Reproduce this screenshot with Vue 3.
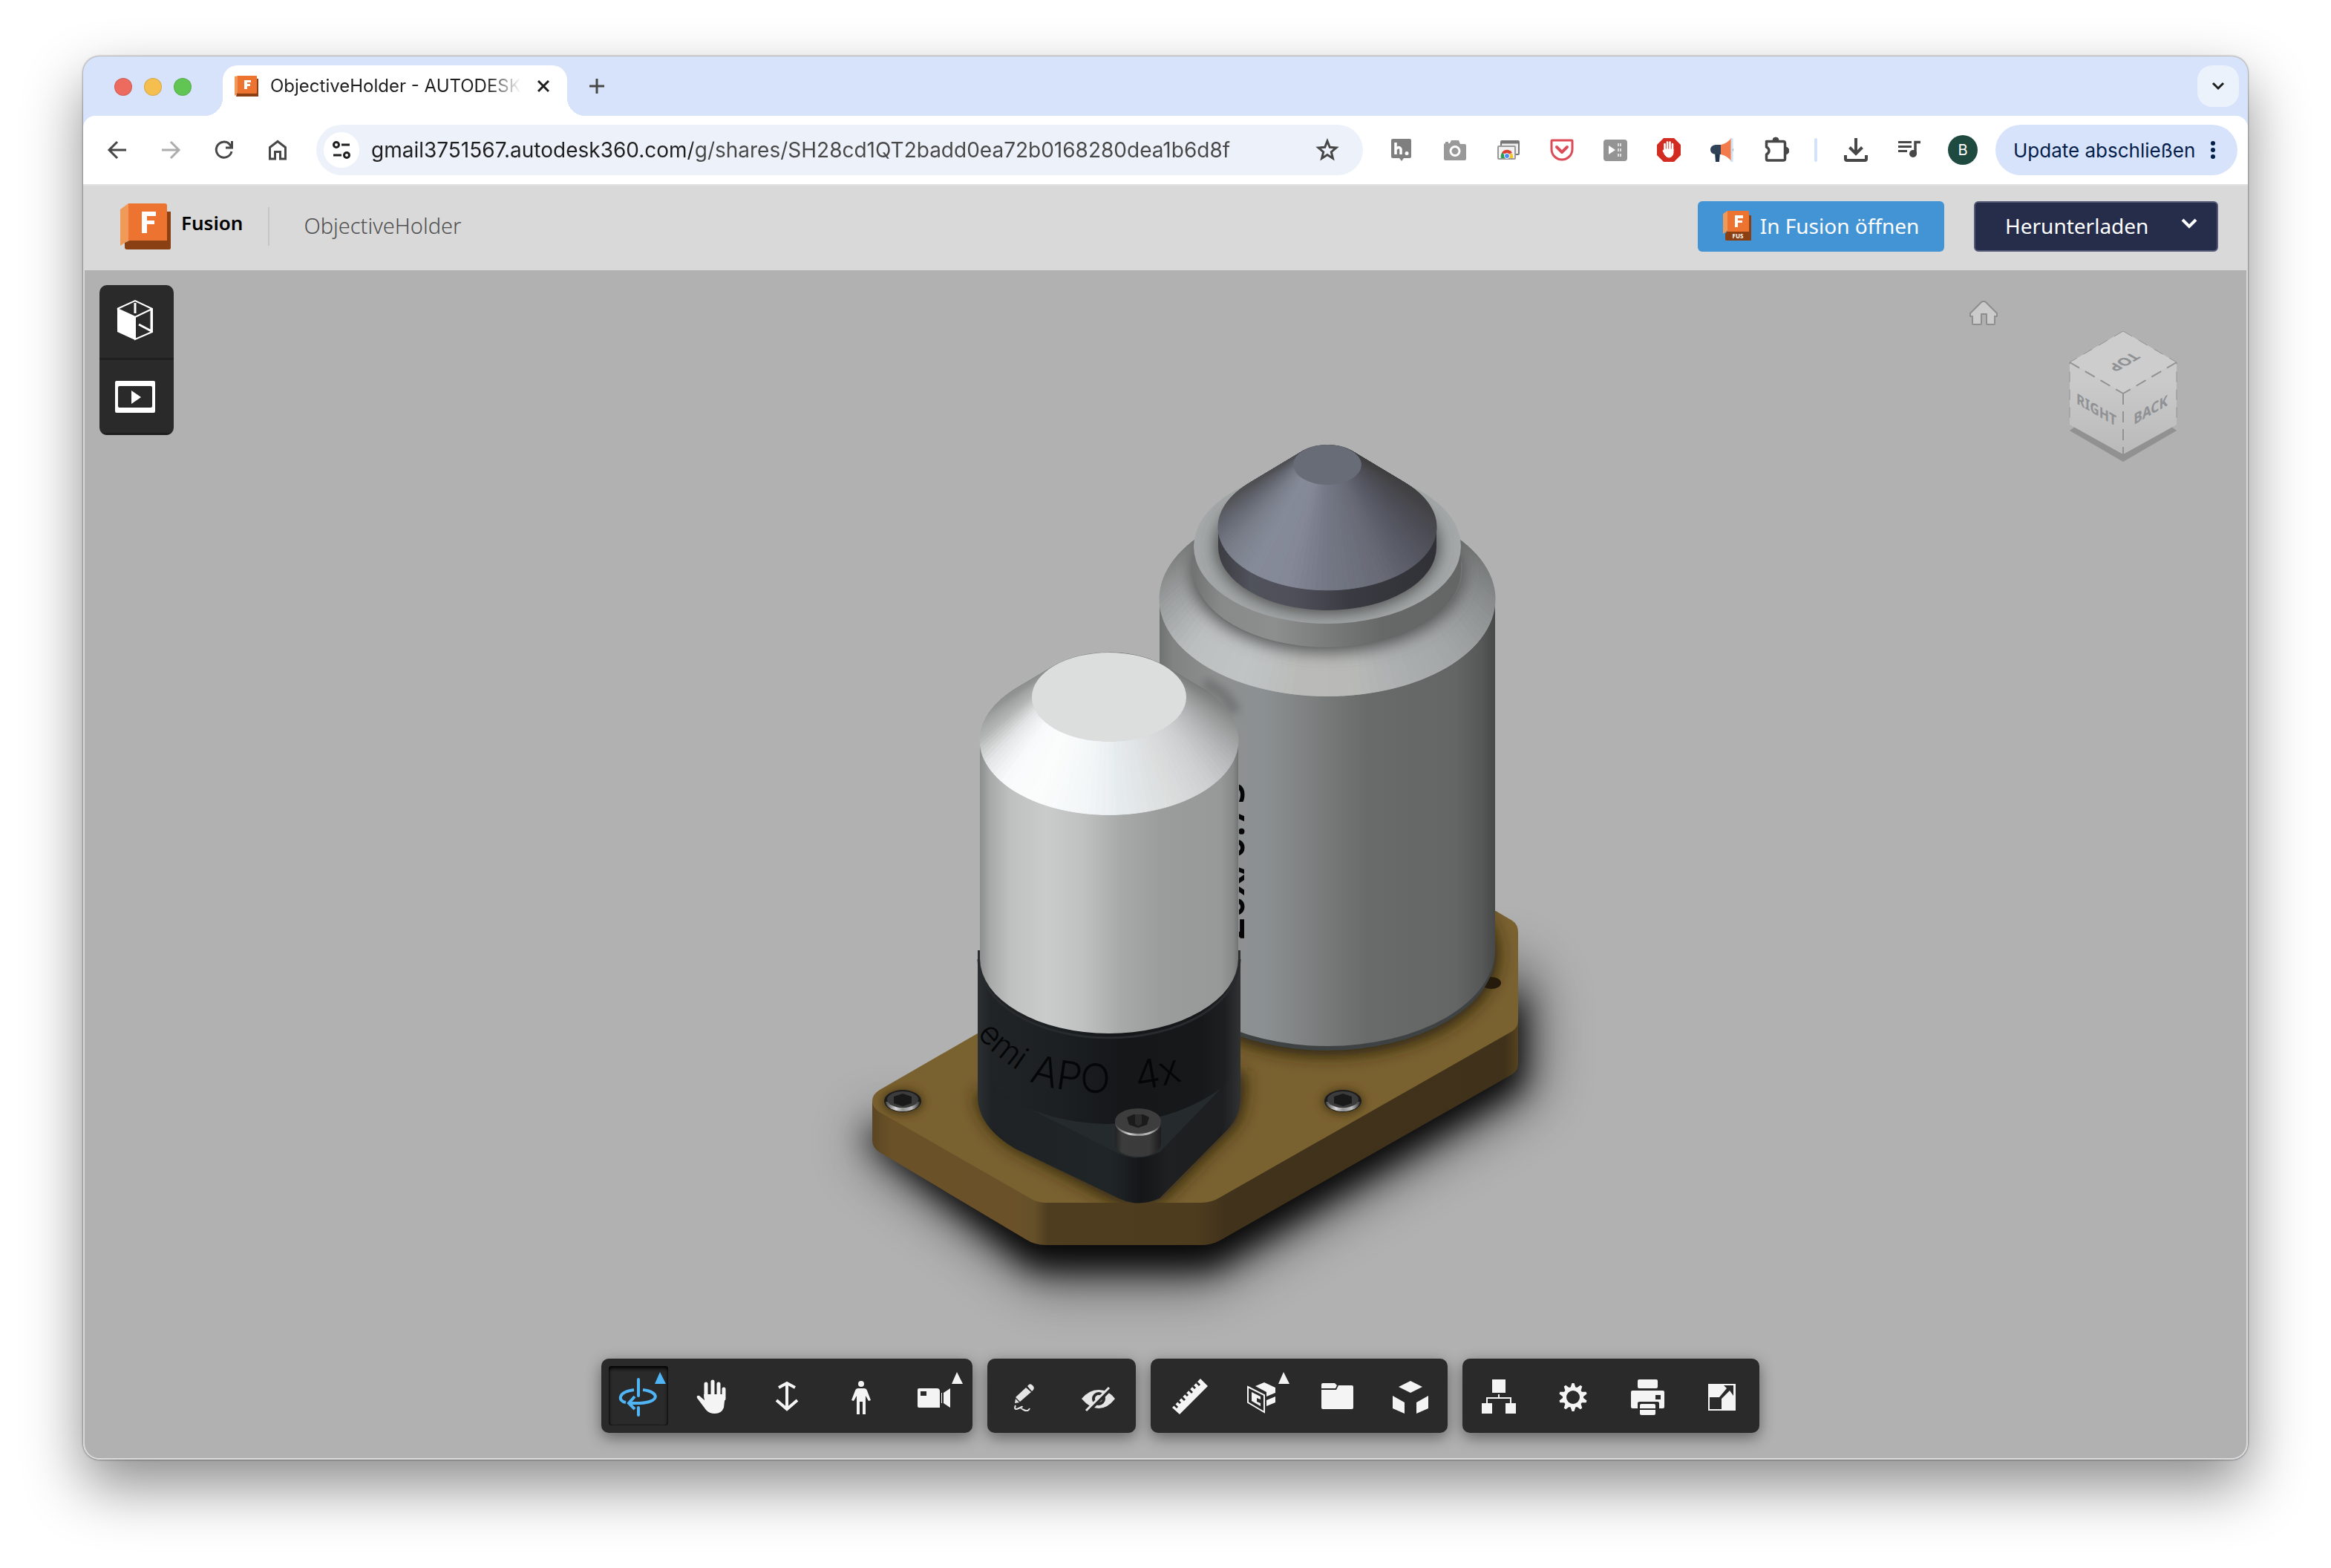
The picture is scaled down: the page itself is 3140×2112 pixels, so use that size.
<script setup>
import { ref } from 'vue'

const url = ref('gmail3751567.autodesk360.com/g/shares/SH28cd1QT2badd0ea72b0168280dea1b6d8f')

const K = 0.577

const hexToRgb = (h) => [1, 3, 5].map((i) => parseInt(h.slice(i, i + 2), 16))

function shade(stops, deg) {
  for (let i = 1; i < stops.length; i++) {
    const [d0, c0] = stops[i - 1]
    const [d1, c1] = stops[i]
    if (deg <= d1) {
      const t = (deg - d0) / (d1 - d0)
      const a = hexToRgb(c0)
      const b = hexToRgb(c1)
      return `rgb(${a.map((v, j) => Math.round(v + (b[j] - v) * t)).join(',')})`
    }
  }
  return stops[stops.length - 1][1]
}

// Facets of a truncated cone, sorted from back to front. Angles: 0 right, 90 front, 180 left.
function frustum(cx, y1, r1, y2, r2, stops) {
  const n = 120
  const facets = []
  for (let i = 0; i < n; i++) {
    const a0 = -90 + (i * 360) / n
    const a1 = a0 + 360 / n
    const pt = (r, y, a) => {
      const t = (a * Math.PI) / 180
      return `${(cx + r * Math.cos(t)).toFixed(1)},${(y + r * K * Math.sin(t)).toFixed(1)}`
    }
    facets.push({
      depth: Math.sin((((a0 + a1) / 2) * Math.PI) / 180),
      color: shade(stops, (a0 + a1) / 2),
      points: [pt(r1, y1, a0), pt(r1, y1, a1), pt(r2, y2, a1), pt(r2, y2, a0)].join(' '),
    })
  }
  return facets.sort((a, b) => a.depth - b.depth)
}

const noseCone = frustum(1788, 624, 46, 708, 147, [
  [-90, '#3f3f41'], [-35, '#3f3f41'], [-12, '#434346'], [8, '#4a4a52'], [35, '#565863'], [60, '#686b76'],
  [90, '#747885'], [112, '#858997'], [135, '#868b99'], [155, '#7b7f8b'], [180, '#636670'], [205, '#505155'], [225, '#515254'], [270, '#515254'],
])
const largeBevel = frustum(1788, 766, 182, 805, 226, [
  [-90, '#6a6d6c'], [-40, '#6a6d6c'], [-10, '#7e8181'], [10, '#8d9090'], [40, '#a3a6a7'], [65, '#adb0b1'],
  [82, '#b9bab8'], [100, '#babbb9'], [120, '#c0c4c5'], [145, '#bdc0c0'], [165, '#a6a9a9'], [190, '#8b8e8d'], [225, '#707372'], [270, '#707372'],
])
const smallBevel = frustum(1494, 937, 104, 995, 174, [
  [-90, '#707171'], [-45, '#757676'], [-20, '#858686'], [0, '#9d9e9e'], [20, '#b8b9ba'], [40, '#cfd0d2'],
  [60, '#dbdddd'], [85, '#e6ebee'], [100, '#f3f6f7'], [125, '#fbfdfd'], [145, '#f8fafb'], [162, '#e2e4e5'], [180, '#b4b6b6'], [205, '#929493'], [225, '#8b8d8d'], [270, '#8b8d8d'],
])
const solids = { noseCone, largeBevel, smallBevel }

const extensions = ['hypothesis', 'camera', 'tabs', 'pocket', 'speed', 'blocker', 'megaphone', 'puzzle']

const groups = [
  [
    { id: 'orbit', label: 'Orbit', menu: true, active: true },
    { id: 'pan', label: 'Pan' },
    { id: 'zoom', label: 'Zoom' },
    { id: 'walk', label: 'First person' },
    { id: 'video', label: 'Camera', menu: true },
  ],
  [
    { id: 'markup', label: 'Markup' },
    { id: 'hide', label: 'Hide markup' },
  ],
  [
    { id: 'measure', label: 'Measure' },
    { id: 'section', label: 'Section', menu: true },
    { id: 'folder', label: 'Documents' },
    { id: 'explode', label: 'Explode' },
  ],
  [
    { id: 'tree', label: 'Model browser' },
    { id: 'gear', label: 'Settings' },
    { id: 'print', label: 'Print' },
    { id: 'full', label: 'Full screen' },
  ],
]

const gearPoints = Array.from({ length: 40 }, (_, i) => {
  const r = i % 4 < 2 ? 19 : 14
  const a = ((i * 9 - 94.5) * Math.PI) / 180
  return `${(49 + r * Math.cos(a)).toFixed(1)},${(52 + r * Math.sin(a)).toFixed(1)}`
}).join(' ')
</script>

<template>
  <div class="page">
    <div class="window">
      <div class="tabstrip">
        <div class="lights">
          <button class="light red" aria-label="Close window"></button>
          <button class="light yellow" aria-label="Minimise"></button>
          <button class="light green" aria-label="Zoom window"></button>
        </div>
        <div class="tab">
          <svg class="favicon" viewBox="0 0 32 28" aria-hidden="true">
            <path d="M0 1 5 0V24L0 27Z" fill="#f09a5a" />
            <path d="M3 24 30 4H32V28H2Z" fill="#8a4012" />
            <rect x="4" width="26" height="24" rx="1" fill="#ed7430" />
            <path d="M13 6H22V9H17V11H21V14H17V18H13Z" fill="#fff" />
          </svg>
          <span class="tab-title">ObjectiveHolder - AUTODESK</span>
          <button class="tab-close" aria-label="Close tab">
            <svg viewBox="0 0 16 16"><path d="M1 1 15 15M15 1 1 15" stroke="#1f1f1f" stroke-width="3" /></svg>
          </button>
        </div>
        <button class="new-tab" aria-label="New tab">
          <svg viewBox="0 0 20 20"><path d="M10 0V20M0 10H20" stroke="#474747" stroke-width="3" /></svg>
        </button>
        <button class="tab-search" aria-label="Search tabs">
          <svg viewBox="0 0 18 12"><path d="M2 2 9 9 16 2" fill="none" stroke="#1f1f1f" stroke-width="3" /></svg>
        </button>
      </div>

      <div class="toolbar">
        <button class="icon-btn" aria-label="Back">
          <svg viewBox="0 0 32 32"><path d="M28 16H6M16 5 5 16 16 27" fill="none" stroke="#474747" stroke-width="3" /></svg>
        </button>
        <button class="icon-btn" aria-label="Forward">
          <svg viewBox="0 0 32 32"><path d="M4 16H26M16 5 27 16 16 27" fill="none" stroke="#adadad" stroke-width="3" /></svg>
        </button>
        <button class="icon-btn" aria-label="Reload">
          <svg viewBox="0 0 32 32"><path d="M26 18A10.500 10.500 0 1 1 23 8L26 12M26.500 4V13H18" fill="none" stroke="#474747" stroke-width="3" /></svg>
        </button>
        <button class="icon-btn" aria-label="Home">
          <svg viewBox="0 0 32 32"><path d="M5.500 28V12.500L16 4.500 26.500 12.500V28H19.500V18.500H12.500V28Z" fill="none" stroke="#474747" stroke-width="3" /></svg>
        </button>
        <div class="omnibox">
          <button class="site-info" aria-label="Site information">
            <svg viewBox="0 0 28 28"><g fill="none" stroke="#1f1f1f" stroke-width="3"><circle cx="7" cy="7" r="3.500" /><path d="M14 7H25M3 21H14" /><circle cx="21" cy="21" r="3.500" /></g></svg>
          </button>
          <input v-model="url" class="url" type="text" aria-label="Address" spellcheck="false" />
          <button class="star" aria-label="Bookmark">
            <svg viewBox="0 0 32 32"><path d="M16 4 19.300 12.300 28 13 21.300 18.700 23.400 27.200 16 22.600 8.600 27.200 10.700 18.700 4 13 12.700 12.300Z" fill="none" stroke="#474747" stroke-width="3" /></svg>
          </button>
        </div>
        <div class="extensions">
          <button v-for="e in extensions" :key="e" class="icon-btn" :aria-label="e">
            <svg v-if="e === 'hypothesis'" viewBox="0 0 36 36">
              <path d="M6 3H29Q31 3 31 5V27Q31 29 29 29H21L18 33 15 29H6Q4 29 4 27V5Q4 3 6 3Z" fill="#7f7f7f" />
              <path d="M10 8V24M10 17Q15 12 17 17V24" fill="none" stroke="#fff" stroke-width="3.500" />
              <circle cx="25" cy="22.500" r="2.500" fill="#fff" />
            </svg>
            <svg v-else-if="e === 'camera'" viewBox="0 0 36 36">
              <path d="M3 11Q3 9 5 9V7H9V9H11L13 5H23L25 10H31Q33 10 33 12V30Q33 32 31 32H5Q3 32 3 30Z" fill="#999" />
              <circle cx="18" cy="19.500" r="6" fill="none" stroke="#fff" stroke-width="3" />
            </svg>
            <svg v-else-if="e === 'tabs'" viewBox="0 0 36 36">
              <rect x="8" y="6" width="24" height="18" rx="1" fill="#eee" stroke="#777" stroke-width="2" />
              <path d="M8 8H32" stroke="#777" stroke-width="3" />
              <rect x="4" y="13" width="23" height="17" rx="1" fill="#f2f2f2" stroke="#999" stroke-width="2" />
              <path d="M8 29A8 8 0 0 1 10 21L15 29Z" fill="#2f9a50" />
              <path d="M9 22A8 8 0 0 1 23 22L16 24Z" fill="#d8402f" />
              <path d="M16 23H23A8 8 0 0 1 24 29H17Z" fill="#f5c431" />
              <circle cx="16" cy="26" r="3.500" fill="#4b8bf5" stroke="#fff" />
            </svg>
            <svg v-else-if="e === 'pocket'" viewBox="0 0 36 36">
              <path d="M5 5H31Q32 5 32 6V17A14 14 0 0 1 4 17V6Q4 5 5 5Z" fill="none" stroke="#dd4b57" stroke-width="3" />
              <path d="M11 14 18 21 25 14" fill="none" stroke="#dd4b57" stroke-width="4" stroke-linecap="round" stroke-linejoin="round" />
            </svg>
            <svg v-else-if="e === 'speed'" viewBox="0 0 36 36">
              <rect x="2" y="4" width="32" height="29" rx="4" fill="#949494" />
              <path d="M9 12 18 18 9 24Z" fill="#fff" />
              <path d="M21 11H26M21 18H26M21 25H26" stroke="#ddd" stroke-width="4" stroke-dasharray="2 1" />
            </svg>
            <svg v-else-if="e === 'blocker'" viewBox="0 0 36 36">
              <path d="M11 2H25L34 11V25L25 34H11L2 25V11Z" fill="#d22b22" />
              <g stroke="#fff" stroke-width="2.600" stroke-linecap="round" fill="#fff">
                <path d="M12.500 19V10M16 17V7.500M19.500 17V7.500M23 19V10" />
                <path d="M12.500 17H24V22Q23 28 18 28 15 28 13 25L10 19Q10 17 13 20Z" stroke-width="1" />
              </g>
            </svg>
            <svg v-else-if="e === 'megaphone'" viewBox="0 0 36 36">
              <path d="M30 14Q36 18 30 21Z" fill="#2c3e55" />
              <path d="M8 21H15L14 34H9Z" fill="#23364d" />
              <path d="M17 11V24H9Q2 23 2 17.500T9 11Z" fill="#2f4257" />
              <path d="M16 11Q25 9 30 2V33Q25 26 16 24Z" fill="#f27a4b" />
              <path d="M31 2V34" stroke="#cfe3f2" stroke-width="3" />
            </svg>
            <svg v-else viewBox="0 0 36 36">
              <path d="M5.500 6.500H28Q30.500 6.500 30.500 9V30Q30.500 32 28 32H7Q5.500 32 5.500 30V24Q9 22 9 19T5.500 14Z" fill="none" stroke="#474747" stroke-width="3.500" stroke-linejoin="round" />
              <path d="M14 5A4 4 0 0 1 22 5ZM31 14A5 5 0 0 1 31 24Z" fill="#474747" stroke="#474747" />
            </svg>
          </button>
        </div>
        <span class="separator"></span>
        <button class="icon-btn" aria-label="Downloads">
          <svg viewBox="0 0 36 36"><path d="M18 2V23M9.500 14.500 18 23 26.500 14.500M4 25V30Q4 32 6 32H30Q32 32 32 30V25" fill="none" stroke="#474747" stroke-width="4" /></svg>
        </button>
        <button class="icon-btn" aria-label="Media">
          <svg viewBox="0 0 36 36"><path d="M3 7.500H21M3 13.500H21M3 19.500H15" stroke="#474747" stroke-width="3" /><circle cx="23" cy="23" r="5" fill="#474747" /><path d="M26 23V7.500H33" fill="none" stroke="#474747" stroke-width="3.500" /></svg>
        </button>
        <button class="icon-btn" aria-label="Profile"><span class="avatar">B</span></button>
        <button class="update">
          <span>Update abschließen</span>
          <svg viewBox="0 0 6 36" aria-hidden="true"><g fill="#041e49"><circle cx="3" cy="9" r="3" /><circle cx="3" cy="18" r="3" /><circle cx="3" cy="27" r="3" /></g></svg>
        </button>
      </div>

      <header class="app-header">
        <svg class="logo" viewBox="0 0 68 62" aria-hidden="true">
          <path d="M0 8 11 0V50L0 57Z" fill="#f09a5a" />
          <path d="M6 53 12 50H62V11H68V60Q68 62 66 62H9Q6 62 6 59Z" fill="#8a4012" />
          <path d="M11 0H60Q63 0 63 3V50H11Z" fill="#ed7430" />
          <path d="M29 11H48V17H36V23H46V28H36V40H29Z" fill="#fff" />
        </svg>
        <span class="brand">Fusion</span>
        <span class="rule"></span>
        <h1 class="doc-title">ObjectiveHolder</h1>
        <button class="open-btn">
          <svg viewBox="0 0 38 40" aria-hidden="true">
            <path d="M0 4 6 0V27L0 31Z" fill="#f09a5a" />
            <path d="M3 31 6 27H34V6H38V40H5Q3 40 3 38Z" fill="#8a4012" />
            <path d="M6 0H33Q35 0 35 2V28H6Z" fill="#ed7430" />
            <path d="M16 6H27V10H20V13H26V16H20V22H16Z" fill="#fff" />
            <text x="20" y="37" text-anchor="middle" font-size="8" font-weight="700" fill="#fff">FUS</text>
          </svg>
          <span>In Fusion öffnen</span>
        </button>
        <button class="download-btn">
          <span>Herunterladen</span>
          <svg viewBox="0 0 22 14" aria-hidden="true"><path d="M2 2 11 11 20 2" fill="none" stroke="#fff" stroke-width="4" /></svg>
        </button>
      </header>

      <main class="viewer">
        <svg class="scene" viewBox="114 362 2912 1600" role="img" aria-label="ObjectiveHolder">
          <defs>
            <filter id="blur40" x="-30%" y="-50%" width="160%" height="200%"><feGaussianBlur stdDeviation="36" /></filter>
            <filter id="blur20" x="-30%" y="-50%" width="160%" height="200%"><feGaussianBlur stdDeviation="20" /></filter>
            <filter id="blur12" x="-30%" y="-30%" width="160%" height="160%"><feGaussianBlur stdDeviation="11" /></filter>
            <filter id="blur6" x="-30%" y="-30%" width="160%" height="160%"><feGaussianBlur stdDeviation="6" /></filter>
            <linearGradient id="plateSide" gradientUnits="userSpaceOnUse" x1="1175" y1="0" x2="2045" y2="0">
              <stop offset="0" stop-color="#5b4623" /><stop offset=".03" stop-color="#6a5128" /><stop offset=".22" stop-color="#6a5129" />
              <stop offset=".25" stop-color="#65502a" /><stop offset=".272" stop-color="#4f3d1f" /><stop offset=".5" stop-color="#4e3c1e" />
              <stop offset=".545" stop-color="#41331b" /><stop offset=".98" stop-color="#40321a" /><stop offset="1" stop-color="#55421f" />
            </linearGradient>
            <linearGradient id="largeBody">
              <stop offset="0" stop-color="#6f7271" /><stop offset=".04" stop-color="#808382" /><stop offset=".18" stop-color="#8f9191" />
              <stop offset=".31" stop-color="#8b9092" /><stop offset=".4" stop-color="#838686" /><stop offset=".52" stop-color="#757777" />
              <stop offset=".62" stop-color="#696b6a" /><stop offset=".88" stop-color="#646665" /><stop offset=".96" stop-color="#565857" /><stop offset="1" stop-color="#474948" />
            </linearGradient>
            <linearGradient id="ringSide">
              <stop offset="0" stop-color="#717473" /><stop offset=".1" stop-color="#878a89" /><stop offset=".3" stop-color="#8d8f8e" />
              <stop offset=".55" stop-color="#747776" /><stop offset=".7" stop-color="#676968" /><stop offset="1" stop-color="#646665" />
            </linearGradient>
            <linearGradient id="noseSide">
              <stop offset="0" stop-color="#3c3d42" /><stop offset=".15" stop-color="#50525c" /><stop offset=".35" stop-color="#4e4f59" />
              <stop offset=".6" stop-color="#3a3b42" /><stop offset="1" stop-color="#303036" />
            </linearGradient>
            <linearGradient id="smallBody">
              <stop offset="0" stop-color="#8c8e8e" /><stop offset=".04" stop-color="#a8aaaa" /><stop offset=".12" stop-color="#bfc1c0" />
              <stop offset=".26" stop-color="#cacccc" /><stop offset=".4" stop-color="#bfc1c0" /><stop offset=".55" stop-color="#a7a9a8" />
              <stop offset=".7" stop-color="#9b9d9c" /><stop offset=".93" stop-color="#979998" /><stop offset=".98" stop-color="#888a89" /><stop offset="1" stop-color="#727473" />
            </linearGradient>
            <linearGradient id="black">
              <stop offset="0" stop-color="#2c2f31" /><stop offset=".05" stop-color="#212426" /><stop offset=".3" stop-color="#1c2022" />
              <stop offset=".55" stop-color="#151719" /><stop offset=".85" stop-color="#17181a" /><stop offset=".94" stop-color="#1d1f20" /><stop offset="1" stop-color="#303233" />
            </linearGradient>
            <linearGradient id="blackBase">
              <stop offset="0" stop-color="#2c2f31" /><stop offset=".06" stop-color="#1e2224" /><stop offset=".5" stop-color="#202527" />
              <stop offset=".56" stop-color="#1b1f21" /><stop offset=".62" stop-color="#141618" /><stop offset=".68" stop-color="#1a1b1d" />
              <stop offset=".72" stop-color="#1f2021" /><stop offset=".93" stop-color="#1c1e1f" /><stop offset="1" stop-color="#303233" />
            </linearGradient>
            <linearGradient id="screwSide">
              <stop offset="0" stop-color="#222" /><stop offset=".15" stop-color="#3c3c3c" /><stop offset=".75" stop-color="#3a3a3a" /><stop offset="1" stop-color="#1c1c1c" />
            </linearGradient>
            <linearGradient id="rim">
              <stop offset="0" stop-color="#444" /><stop offset=".3" stop-color="#d8d8d8" /><stop offset=".5" stop-color="#909090" /><stop offset=".75" stop-color="#c0c0c0" /><stop offset="1" stop-color="#333" />
            </linearGradient>
            <clipPath id="plateClip"><path d="M1185 1466 1315 1391 1600 1225H2015L2037 1238Q2045 1243 2045 1254V1372Q2045 1382 2037 1387L1643 1611Q1632 1618 1618 1618H1408Q1396 1618 1386 1611L1185 1496Q1175 1490 1175 1481T1185 1466Z" /></clipPath>
            <clipPath id="bevelClip"><ellipse cx="1788" cy="805" rx="226" ry="131" /></clipPath>
            <clipPath id="ringClip"><ellipse cx="1788" cy="734" rx="180" ry="104" /></clipPath>
            <clipPath id="largeClip"><path d="M1562 805V1276A226 131 0 0 0 2014 1276V805Z" /></clipPath>
            <clipPath id="letterClip"><rect x="1669" y="1000" width="60" height="290" /></clipPath>
            <clipPath id="blackClip"><path d="M1318 1278V1520H1670V1278Z" /></clipPath>
            <path id="labelLeft" d="M1316 1391Q1338 1422 1400 1458" />
            <path id="labelMain" d="M1386 1454Q1490 1490 1624 1444" />
          </defs>

          <path d="M1175 1500 1406 1675H1620L2045 1430V1310L2015 1290 1640 1600 1400 1560Z" fill="#000" stroke="#000" stroke-width="50" opacity=".55" filter="url(#blur40)" transform="translate(0 26)" />
          <path d="M1176 1520 1396 1690H1630L2044 1446V1340L1600 1600 1300 1520Z" fill="#000" stroke="#000" stroke-width="12" opacity=".9" filter="url(#blur20)" transform="translate(0 10)" />

          <path d="M1175 1481V1534Q1175 1544 1185 1550L1383 1668Q1394 1675 1408 1675H1618Q1632 1675 1643 1669L2037 1445Q2045 1440 2045 1430V1372L1620 1560H1400Z" fill="url(#plateSide)" />
          <path d="M1185 1466 1315 1391 1600 1225H2015L2037 1238Q2045 1243 2045 1254V1372Q2045 1382 2037 1387L1643 1611Q1632 1618 1618 1618H1408Q1396 1618 1386 1611L1185 1496Q1175 1490 1175 1481T1185 1466Z" fill="#7a6130" />
          <g clip-path="url(#plateClip)">
            <ellipse cx="1788" cy="1284" rx="230" ry="136" fill="#2b2210" filter="url(#blur12)" />
            <path d="M1314 1470Q1320 1515 1364 1544L1505 1618Q1533 1630 1565 1615L1664 1515Q1680 1490 1676 1440Z" fill="#2b2210" filter="url(#blur12)" />
            <ellipse cx="1216" cy="1482" rx="28" ry="17" fill="#4a3919" filter="url(#blur6)" />
            <ellipse cx="1809" cy="1482" rx="28" ry="17" fill="#4a3919" filter="url(#blur6)" />
          </g>
          <ellipse cx="2009" cy="1322" rx="13" ry="8" fill="#241b0c" />

          <g v-for="x in [1216, 1809]" :key="x">
            <ellipse :cx="x" cy="1481" rx="25" ry="15" fill="#1c1c1c" />
            <path :d="`M${x - 23} 1482A23 13 0 0 0 ${x + 23} 1482Z`" fill="url(#rim)" />
            <ellipse :cx="x" cy="1479" rx="21" ry="11" fill="#3c3c3c" />
            <path :d="`M${x - 12} 1475 ${x} 1471 ${x + 12} 1475V1484L${x} 1488 ${x - 12} 1484Z`" fill="#191919" />
          </g>

          <path d="M1562 805V1282A226 131 0 0 0 2014 1282V805Z" fill="#3f4242" />
          <path d="M1562 805V1276A226 131 0 0 0 2014 1276V805Z" fill="url(#largeBody)" />
          <g clip-path="url(#largeClip)">
            <path d="M1622 918Q1652 930 1664 958" fill="none" stroke="#606363" stroke-width="16" opacity=".6" filter="url(#blur6)" />
          </g>
          <g clip-path="url(#letterClip)">
            <text transform="translate(1676 1264) rotate(-90)" font-size="52" font-weight="600" fill="#060606">20x/0.75</text>
          </g>
          <ellipse cx="1788" cy="805" rx="226" ry="131" fill="#a5a8a8" />
          <g>
            <polygon v-for="(f, i) in solids.largeBevel" :key="i" :points="f.points" :fill="f.color" :stroke="f.color" />
          </g>
          <g clip-path="url(#bevelClip)">
            <ellipse cx="1788" cy="770" rx="184" ry="106" fill="#4f5151" filter="url(#blur12)" />
          </g>
          <path d="M1608 734V766A180 104 0 0 0 1968 766V734Z" fill="url(#ringSide)" />
          <ellipse cx="1788" cy="734" rx="180" ry="104" fill="#a4a8a8" />
          <g clip-path="url(#ringClip)">
            <ellipse cx="1788" cy="734" rx="150" ry="90" fill="#474949" filter="url(#blur12)" />
          </g>
          <path d="M1641 708V735A147 85 0 0 0 1935 735V708Z" fill="url(#noseSide)" />
          <g>
            <polygon v-for="(f, i) in solids.noseCone" :key="i" :points="f.points" :fill="f.color" :stroke="f.color" />
          </g>
          <ellipse cx="1788" cy="624" rx="46" ry="27" fill="#686c77" />

          <path d="M1317 1278V1475Q1317 1515 1367 1545L1507 1612Q1533 1625 1562 1612L1655 1518Q1671 1500 1671 1475V1278Z" fill="url(#blackBase)" />
          <path d="M1386 1491 1507 1552Q1533 1564 1562 1550L1645 1464Z" fill="#252a2d" />
          <path d="M1317 1278V1420Q1330 1470 1386 1491 1430 1510 1490 1512 1580 1510 1645 1464 1671 1440 1671 1400V1278Z" fill="url(#black)" />
          <path d="M1318 1290A176 106 0 0 0 1670 1290" fill="none" stroke="#282b2d" stroke-width="3" />
          <path d="M1320 995V1289A174 101 0 0 0 1668 1289V995Z" fill="url(#smallBody)" />
          <g clip-path="url(#blackClip)" class="engraving" fill="#050607">
            <text font-size="44"><textPath href="#labelLeft">emi</textPath></text>
            <text font-size="54"><textPath href="#labelMain">APO</textPath></text>
            <text font-size="54"><textPath href="#labelMain" startOffset="148">4x</textPath></text>
          </g>
          <g>
            <polygon v-for="(f, i) in solids.smallBevel" :key="i" :points="f.points" :fill="f.color" :stroke="f.color" />
          </g>
          <ellipse cx="1494" cy="937" rx="104" ry="60" fill="#dcdedd" />

          <path d="M1502 1510V1538A31 18 0 0 0 1564 1538V1510Z" fill="url(#screwSide)" />
          <path d="M1502 1510A31 18 0 0 0 1564 1510" fill="url(#rim)" />
          <ellipse cx="1533" cy="1508" rx="31" ry="17" fill="#3d3d3d" />
          <path d="M1518 1503 1527 1499H1540L1548 1503 1545 1513 1533 1517 1521 1513Z" fill="#1b1b1b" />
          <path d="M1529 1499H1538V1512L1533 1515 1529 1512Z" fill="#2c2c2c" />
        </svg>

        <div class="side-tools">
          <button aria-label="Model">
            <svg viewBox="0 0 100 98">
              <path d="M24 32 48 43V74L24 63Z" fill="#fff" />
              <path d="M24 32 48 21 71 32V63L48 73V43L71 32M24 32 48 43" fill="none" stroke="#fff" stroke-width="2" />
              <path d="M48 24V38M53 53 70 62M70 32V63" fill="none" stroke="#fff" stroke-width="3" />
            </svg>
          </button>
          <button aria-label="Animation">
            <svg viewBox="0 0 100 98">
              <path d="M23 28H73Q75 28 75 30V69Q75 71 73 71H23Q21 71 21 69V30Q21 28 23 28ZM27 35Q25 35 25 37V62Q25 64 27 64H69Q71 64 71 62V37Q71 35 69 35Z" fill="#fff" fill-rule="evenodd" />
              <path d="M43 41 56 50 43 59Z" fill="#fff" />
            </svg>
          </button>
        </div>

        <div class="view-cube">
          <button class="cube-home" aria-label="Home view">
            <svg viewBox="0 0 40 36"><path d="M20 2Q22 2 23 3L38 18V22H35V32Q35 33 34 33H25Q24 33 24 32V19H17V32Q17 33 16 33H7Q5 33 5 32V22H2V18L17 3Q18 2 20 2Z" fill="#cbcbcb" stroke="#8e8e8e" stroke-width="2" stroke-linejoin="round" /></svg>
          </button>
          <svg class="cube" viewBox="2786 444 148 180" role="img" aria-label="View cube">
            <defs>
              <linearGradient id="face" x1="0" y1="0" x2="0" y2="1"><stop offset=".2" stop-color="#cacaca" /><stop offset="1" stop-color="#bababa" /></linearGradient>
            </defs>
            <path d="M2788 580 2796 574 2924 574 2932 580 2860 622Z" fill="#919191" />
            <path d="M2788 488 2860 530V612L2788 572Z" fill="url(#face)" />
            <path d="M2932 488 2860 530V612L2932 572Z" fill="url(#face)" />
            <path d="M2860 446 2932 488 2860 530 2788 488Z" fill="#cdcdcd" />
            <g fill="none" stroke="#929292">
              <path d="M2860 446 2788 488V572M2860 446 2932 488V572" stroke-dasharray="14 10" />
              <path d="M2788 488 2860 530M2932 488 2860 530M2860 530V612" stroke-width="2" stroke-dasharray="15 9" />
            </g>
            <g font-size="20" font-weight="700" fill="#8f9195" text-anchor="middle">
              <text transform="matrix(.866 .5 0 1 2824 559)">RIGHT</text>
              <text transform="matrix(.866 -.5 0 1 2897 559)">BACK</text>
              <text transform="matrix(-.866 .5 -.866 -.5 2855 484)">TOP</text>
            </g>
          </svg>
        </div>

        <div class="bottom-tools">
          <div v-for="(g, gi) in groups" :key="gi" class="tool-group">
            <button v-for="t in g" :key="t.id" class="tool" :class="{ active: t.active }" :aria-label="t.label">
              <svg viewBox="0 0 100 100" fill="currentColor">
                <path v-if="t.menu" d="M72 34 79 18 87 34Z" />
                <template v-if="t.id === 'orbit'">
                  <path d="M50 28V50M50 66V76" stroke="currentColor" stroke-width="4" stroke-linecap="round" fill="none" />
                  <path d="M44 42C22 45 22 57 33 59M56 42C80 45 78 59 52 60H38" fill="none" stroke="currentColor" stroke-width="4" />
                  <path d="M45 51 37 60 45 68" fill="none" stroke="currentColor" stroke-width="4" />
                </template>
                <template v-else-if="t.id === 'pan'">
                  <path d="M41 52V34M50 50V31M58 50V34M65 54V41" stroke="currentColor" stroke-width="5" stroke-linecap="round" fill="none" />
                  <path d="M38 48H67L65 66Q62 74 53 74 45 74 41 69L29 53Q28 49 32 50L39 56Z" />
                </template>
                <path v-else-if="t.id === 'zoom'" d="M50 34V66M39 39 50 33 61 39M36 56 50 68 64 56" fill="none" stroke="currentColor" stroke-width="4" />
                <template v-else-if="t.id === 'walk'">
                  <circle cx="50" cy="34" r="4" />
                  <path d="M46 40H54Q57 40 58 43L63 56 60 57 56 50V75H52V58H48V75H44V50L40 57 37 56 42 43Q43 40 46 40Z" />
                </template>
                <path v-else-if="t.id === 'video'" fill-rule="evenodd" d="M28 40H52Q56 40 56 44V66H28Q26 66 26 64V42Q26 40 28 40ZM30 44V50H38V44ZM58 46H59V60H58ZM61 46 70 40V66L61 60Z" />
                <g v-else-if="t.id === 'markup'" fill="#e5e5e5">
                  <path d="M52 39 59 45 44 58 38 52ZM54 37 56 35Q58 33 61 36T62 42L60 44ZM38 54 43 59 37 60Z" />
                  <path d="M38 63Q35 70 42 67T46 65 49 69 57 67" fill="none" stroke="#e5e5e5" stroke-width="2" />
                </g>
                <g v-else-if="t.id === 'hide'">
                  <path d="M27 54Q37 42 50 42T72 54Q62 67 50 67T27 54Z" fill="#e5e5e5" />
                  <circle cx="50" cy="54" r="7" fill="none" stroke="#2a2a2a" stroke-width="4" />
                  <path d="M36 70 66 40" stroke="#2a2a2a" stroke-width="6" />
                  <path d="M33 70 64 39" stroke="#e5e5e5" stroke-width="3" />
                </g>
                <g v-else-if="t.id === 'measure'">
                  <path d="M29 66 67 27 77 37 39 75Z" />
                  <path d="M32 62 36 66M37 57 40 60M42 52 46 56M47 47 50 50M52 42 56 46M57 37 60 40M62 32 66 36" stroke="#2a2a2a" stroke-width="3" />
                </g>
                <g v-else-if="t.id === 'section'">
                  <path d="M41 37 53 32 68 39V46L56 51V45ZM56 56 68 51V59L56 64Z" />
                  <path d="M31 38 53 49V72L31 59Z" fill="none" stroke="currentColor" stroke-width="2" />
                  <path d="M36 45 48 51V55L43 53V58L48 60V64L36 57Z" />
                </g>
                <path v-else-if="t.id === 'folder'" d="M32 33H48L51 36 49 40H30V35Q30 33 32 33ZM53 36H71Q73 36 73 38V66Q73 68 71 68H32Q30 68 30 66V42H50Z" />
                <path v-else-if="t.id === 'explode'" d="M34 38 50 30 66 38 50 46ZM26 50 42 59V74L26 67ZM74 50 58 59V74L74 67Z" />
                <g v-else-if="t.id === 'tree'">
                  <path d="M40 28H58V46H40ZM26 60H40V74H26ZM58 60H72V74H58Z" />
                  <path d="M49 48V53M33 60V53H65V60" fill="none" stroke="currentColor" stroke-width="2" />
                </g>
                <g v-else-if="t.id === 'gear'">
                  <polygon :points="gearPoints" />
                  <circle cx="49" cy="52" r="9" fill="#2a2a2a" />
                </g>
                <g v-else-if="t.id === 'print'">
                  <path fill-rule="evenodd" d="M38 28H61Q63 28 63 30V38Q63 40 61 40H38Q36 40 36 38V30Q36 28 38 28ZM29 43H70Q72 43 72 45V65Q72 67 70 67H65V60Q65 58 63 58H39Q36 58 36 60V67H29Q27 67 27 65V45Q27 43 29 43ZM60 49V55H67V49ZM41 61H58Q60 61 60 63V67H39V63Q39 61 41 61ZM39 69H60V74Q60 76 58 76H41Q39 76 39 74Z" />
                </g>
                <path v-else d="M31 34H68V70H31ZM52 36 56 40 46 52H33V68H49V54L60 43 65 50V36Z" fill-rule="evenodd" />
              </svg>
            </button>
          </div>
        </div>
      </main>
    </div>
  </div>
</template>

<style>
body {
  margin: 0;
  background: #fff;
}
</style>

<style scoped>
* {
  box-sizing: border-box;
}
.page {
  display: flex;
  min-height: 100vh;
  padding: 76px 112px 146px;
  font-family: Inter, "Noto Sans", sans-serif;
}
.window {
  display: flex;
  flex: 1;
  flex-direction: column;
  overflow: hidden;
  border-radius: 22px;
  background: #d7e2fb;
  box-shadow: 0 0 2px 1px rgba(0, 0, 0, 0.3), 0 36px 80px rgba(0, 0, 0, 0.45);
}
button {
  display: flex;
  align-items: center;
  justify-content: center;
  margin: 0;
  padding: 0;
  border: 0;
  background: none;
  color: inherit;
  font: inherit;
}
svg {
  display: block;
}

.tabstrip {
  display: flex;
  height: 80px;
  padding: 12px 12px 0 42px;
}
.lights {
  display: flex;
  gap: 16px;
  margin-top: 17px;
  margin-right: 42px;
}
.light {
  width: 24px;
  height: 24px;
  border: 1px solid rgba(0, 0, 0, 0.12);
  border-radius: 50%;
}
.red {
  background: #ed6a5f;
}
.yellow {
  background: #f5bf4f;
}
.green {
  background: #61c554;
}
.tab {
  position: relative;
  display: flex;
  align-items: center;
  width: 464px;
  height: 68px;
  padding: 0 24px 12px 16px;
  border-radius: 20px 20px 0 0;
  background: #fff;
}
.tab::before,
.tab::after {
  position: absolute;
  bottom: 0;
  width: 24px;
  height: 24px;
  content: "";
}
.tab::before {
  left: -24px;
  background: radial-gradient(circle at 0 0, transparent 24px, #fff 24px);
}
.tab::after {
  right: -24px;
  background: radial-gradient(circle at 100% 0, transparent 24px, #fff 24px);
}
.favicon {
  width: 32px;
  height: 28px;
}
.tab-title {
  flex: 1;
  overflow: hidden;
  margin-left: 16px;
  margin-right: 22px;
  color: #1f1f1f;
  font-size: 24px;
  line-height: 32px;
  white-space: nowrap;
  mask-image: linear-gradient(to right, #000 86%, transparent);
}
.tab-close svg {
  width: 16px;
  height: 16px;
}
.new-tab {
  width: 56px;
  height: 56px;
  margin-left: 12px;
}
.new-tab svg {
  width: 20px;
  height: 20px;
}
.tab-search {
  width: 56px;
  height: 56px;
  margin-left: auto;
  border-radius: 20px;
  background: #ecf2fc;
}
.tab-search svg {
  width: 18px;
  height: 12px;
}

.toolbar {
  display: flex;
  align-items: center;
  height: 92px;
  padding: 0 14px 0 10px;
  border-radius: 16px 16px 0 0;
  background: #fff;
}
.icon-btn {
  flex: none;
  width: 72px;
  height: 68px;
}
.icon-btn svg {
  width: 32px;
  height: 32px;
}
.omnibox {
  display: flex;
  flex: 1;
  align-items: center;
  height: 68px;
  margin: 0 16px;
  padding: 0 32px 0 10px;
  border-radius: 34px;
  background: #edf2fa;
}
.site-info {
  flex: none;
  width: 48px;
  height: 48px;
  border-radius: 50%;
  background: #fff;
}
.site-info svg {
  width: 28px;
  height: 28px;
}
.url {
  flex: 1;
  min-width: 0;
  height: 48px;
  margin: 0 16px;
  padding: 0;
  border: 0;
  outline: 0;
  background: linear-gradient(to right, #1f1f1f 433px, #474747 433px);
  background-clip: text;
  color: transparent;
  font-family: inherit;
  font-size: 28px;
}
.star svg {
  width: 32px;
  height: 32px;
}
.extensions {
  display: flex;
}
.extensions svg,
.separator ~ .icon-btn svg {
  width: 36px;
  height: 36px;
}
.separator {
  width: 4px;
  height: 32px;
  margin: 0 16px;
  border-radius: 2px;
  background: #d3e1fb;
}
.avatar {
  width: 40px;
  height: 40px;
  border-radius: 50%;
  background: #1f4a3f;
  color: #fff;
  font-size: 20px;
  line-height: 40px;
}
.update {
  flex: none;
  justify-content: space-between;
  width: 326px;
  height: 68px;
  margin-left: 8px;
  padding: 0 30px 0 24px;
  border-radius: 34px;
  background: #d7e2fb;
  color: #041e49;
  font-size: 26px;
  white-space: nowrap;
}
.update svg {
  width: 6px;
  height: 36px;
}

.app-header {
  display: flex;
  align-items: center;
  height: 116px;
  padding: 0 40px 4px 50px;
  border-top: 2px solid #e1e1e1;
  background: #d9d9d9;
  font-family: "Noto Sans", sans-serif;
}
.logo {
  width: 68px;
  height: 62px;
}
.brand {
  margin: 0 34px 10px 14px;
  color: #000;
  font-size: 26px;
  font-weight: 600;
}
.rule {
  width: 2px;
  height: 52px;
  background: #c6c6c6;
}
.doc-title {
  flex: 1;
  margin: 0 0 0 46px;
  padding-bottom: 2px;
  color: #505050;
  font-size: 29px;
  font-weight: 300;
  line-height: 40px;
}
.open-btn,
.download-btn {
  height: 68px;
  padding-bottom: 2px;
  border-radius: 6px;
  color: #fff;
  font-size: 28px;
  line-height: 40px;
  white-space: nowrap;
}
.open-btn {
  gap: 12px;
  width: 332px;
  background: #4394d4;
}
.open-btn svg {
  width: 38px;
  height: 40px;
}
.download-btn {
  justify-content: space-between;
  width: 329px;
  margin-left: 40px;
  padding-right: 26px;
  padding-left: 40px;
  border: 2px solid #535b77;
  background: #252d4b;
}
.download-btn svg {
  width: 22px;
  height: 14px;
  margin-bottom: 6px;
}

.viewer {
  position: relative;
  display: flex;
  flex: 1;
  flex-direction: column;
  min-height: 0;
  border: 2px solid #dadada;
  border-top: 0;
  border-radius: 0 0 22px 22px;
  background: #b1b1b1;
  font-family: "Noto Sans", sans-serif;
}
.scene {
  position: absolute;
  inset: 0;
  width: 100%;
  height: 100%;
}
.engraving {
  font-family: Inter, sans-serif;
  font-weight: 300;
}
.side-tools {
  position: absolute;
  top: 20px;
  left: 20px;
  overflow: hidden;
  border-radius: 10px;
  background: #2a2a2a;
}
.side-tools button {
  width: 100px;
  height: 101px;
  border-bottom: 3px solid #1f1f1f;
}
.side-tools svg {
  width: 100px;
  height: 98px;
}
.view-cube {
  position: absolute;
  top: 40px;
  right: 92px;
  display: flex;
  align-items: flex-start;
  gap: 94px;
}
.cube-home svg {
  width: 40px;
  height: 36px;
}
.cube {
  width: 148px;
  height: 180px;
  margin-top: 40px;
}
.bottom-tools {
  position: absolute;
  right: 0;
  bottom: 34px;
  left: 40px;
  display: flex;
  justify-content: center;
  gap: 20px;
}
.tool-group {
  display: flex;
  border-radius: 10px;
  background: #2a2a2a;
  box-shadow: 0 6px 20px rgba(0, 0, 0, 0.45);
}
.tool {
  position: relative;
  width: 100px;
  height: 100px;
  color: #f4f4f4;
}
.tool svg {
  position: relative;
  width: 100px;
  height: 100px;
}
.tool.active {
  color: #4fb5f5;
}
.tool.active::before {
  position: absolute;
  inset: 10px;
  border-radius: 4px;
  box-shadow: inset 0 3px 5px #000, inset 0 0 2px #000;
  content: "";
}
</style>
